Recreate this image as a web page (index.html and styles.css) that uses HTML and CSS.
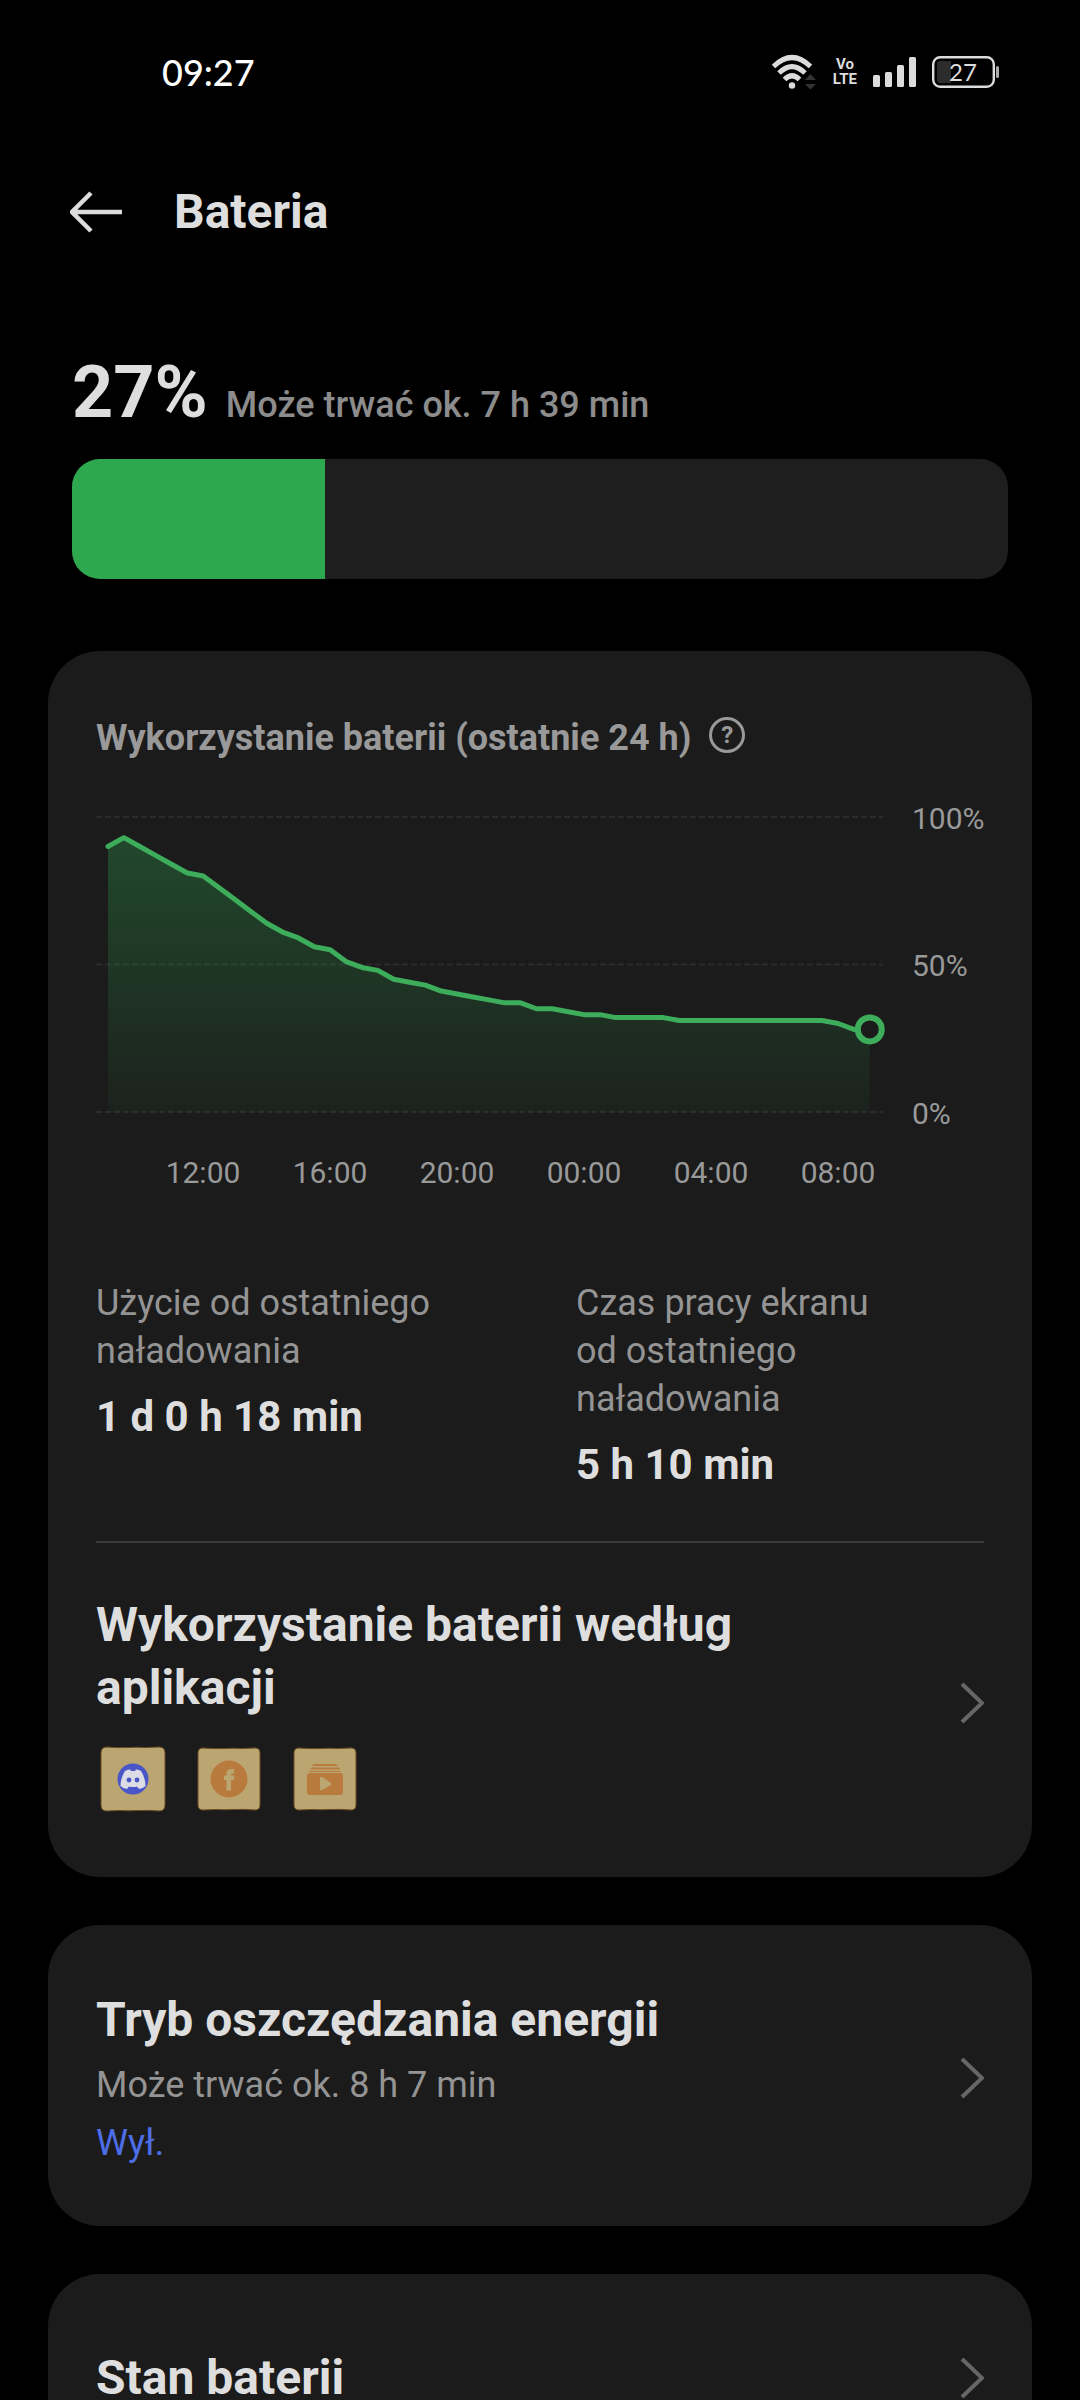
FILE: index.html
```html
<!DOCTYPE html>
<html lang="pl">
<head>
  <meta charset="UTF-8">
  <meta name="viewport" content="width=device-width, initial-scale=1.0">
  <title>Bateria</title>
  <link rel="stylesheet" href="styles.css">
</head>
<body>
  <div class="status-bar">
    <span class="time">09:27</span>
    <div class="status-icons">
      <svg class="wifi" width="46" height="36" viewBox="0 0 46 36">
        <g fill="none" stroke="#dcdcdc" stroke-width="5">
          <path d="M2.500 12.500Q21 -5.500 39.500 12.500"/>
          <path d="M8 19Q21 6 34 19"/>
          <path d="M13.500 25.500Q21 18 28.500 25.500"/>
        </g>
        <circle cx="21" cy="31.500" r="3.200" fill="#dcdcdc"/>
        <path d="M34 26l5.500-6 5.500 6zM34 30l5.500 5.500 5.500-5.500z" fill="#333"/>
      </svg>
      <span class="volte">Vo<br>LTE</span>
      <svg class="signal" width="43" height="30" viewBox="0 0 43 30" fill="#dcdcdc">
        <rect x="0" y="18" width="7" height="12" rx="1.500"/>
        <rect x="12" y="15" width="7" height="15" rx="1.500"/>
        <rect x="24" y="8" width="7" height="22" rx="1.500"/>
        <rect x="36" y="0" width="7" height="30" rx="1.500"/>
      </svg>
      <svg class="battery" width="67" height="32" viewBox="0 0 67 32">
        <rect x="1.200" y="1.200" width="60.600" height="29.600" rx="7" fill="none" stroke="#dcdcdc" stroke-width="2.400"/>
        <path d="M8 5h11v22H8a3 3 0 0 1-3-3V8a3 3 0 0 1 3-3z" fill="#2c2c2c"/>
        <rect x="64" y="10" width="3" height="12" rx="1.500" fill="#aaa"/>
        <text x="31" y="24.500" text-anchor="middle" class="battery-text">27</text>
      </svg>
    </div>
  </div>

  <header class="header">
    <button class="back" aria-label="Wstecz">
      <svg width="54" height="42" viewBox="0 0 54 42" fill="none" stroke="#dcdcdc" stroke-width="4.500">
        <path d="M21 2L2 21l19 19M3 21h49"/>
      </svg>
    </button>
    <h1>Bateria</h1>
  </header>

  <main>
    <section class="level">
      <p class="level-text"><strong>27%</strong> <span>Może trwać ok. 7 h 39 min</span></p>
      <div class="level-bar"><div class="level-fill" style="width: 27%"></div></div>
    </section>

    <section class="card usage">
      <div class="usage-head">
        <h2>Wykorzystanie baterii (ostatnie 24 h)</h2>
        <button class="help" aria-label="Pomoc">?</button>
      </div>

      <svg class="chart" viewBox="0 0 888 410">
        <defs>
          <linearGradient id="fade" x1="0" y1="47" x2="0" y2="322" gradientUnits="userSpaceOnUse">
            <stop offset="0" stop-color="#2ea84f" stop-opacity="0.32"/>
            <stop offset="1" stop-color="#2ea84f" stop-opacity="0.05"/>
          </linearGradient>
        </defs>
        <g class="grid">
          <path d="M0 27h787"/>
          <path d="M0 174.500h787"/>
          <path d="M0 322h787"/>
        </g>
        <polygon id="area" fill="url(#fade)"/>
        <polyline id="line" class="line"/>
        <circle id="now" class="now" r="12"/>
        <g class="axis">
          <text x="816" y="39">100%</text>
          <text x="816" y="186">50%</text>
          <text x="816" y="334">0%</text>
        </g>
        <g class="axis hours">
          <text x="107" y="393">12:00</text>
          <text x="234" y="393">16:00</text>
          <text x="361" y="393">20:00</text>
          <text x="488" y="393">00:00</text>
          <text x="615" y="393">04:00</text>
          <text x="742" y="393">08:00</text>
        </g>
      </svg>

      <div class="stats">
        <div>
          <p class="label">Użycie od&nbsp;ostatniego naładowania</p>
          <p class="value">1 d 0 h 18 min</p>
        </div>
        <div>
          <p class="label">Czas pracy ekranu od&nbsp;ostatniego naładowania</p>
          <p class="value">5 h 10 min</p>
        </div>
      </div>

      <a class="row apps" href="#">
        <div class="row-text">
          <h3>Wykorzystanie baterii według aplikacji</h3>
          <div class="app-icons">
            <svg width="66" height="66" viewBox="0 0 66 66">
              <path class="tile" d="M7 1Q18 2 28 1.500T46 1.500L59 1Q65 1 65 7V59Q65 65 59 65Q48 64 38 64.500T20 64.500L7 65Q1 65 1 59V7Q1 1 7 1z"/>
              <circle cx="33" cy="33" r="15.500" fill="#4a56c8"/>
              <path d="M25 25q3-2 5-1.500l1 1.500h4l1-1.500q2-.5 5 1.500 4.500 7 4.500 15-3 3-6.500 3l-2-2.500q-4 1-8 0L27 43q-3.500 0-6.500-3 0-8 4.500-15z" fill="#dcdce4"/>
              <circle cx="29" cy="34" r="2.400" fill="#4a56c8"/>
              <circle cx="37" cy="34" r="2.400" fill="#4a56c8"/>
            </svg>
            <svg width="66" height="66" viewBox="0 0 66 66">
              <path class="tile" d="M7 2Q18 3 28 2.500T46 2.500L59 2Q64 2 64 7V59Q64 64 59 64Q48 63 38 63.500T20 63.500L7 64Q2 64 2 59V7Q2 2 7 2z"/>
              <circle cx="33" cy="33" r="18.500" fill="#b97a3e"/>
              <path d="M30.500 44.500V34H28v-4.500h2.500V28q0-5 5-5H38v4.500h-2q-1 0-1 1.500v.5h3.500L38 34h-3v10.500z" fill="#bba672"/>
            </svg>
            <svg width="66" height="66" viewBox="0 0 66 66">
              <path class="tile" d="M7 2Q18 3 28 2.500T46 2.500L59 2Q64 2 64 7V59Q64 64 59 64Q48 63 38 63.500T20 63.500L7 64Q2 64 2 59V7Q2 2 7 2z"/>
              <g fill="#b97a3e">
                <path d="M23 18h20q2 0 3 2H20q1-2 3-2zM19 21.500h28l1 2H18zM17.500 25h31l.5 1H17z"/>
                <rect x="15" y="27" width="36" height="22" rx="3"/>
              </g>
              <path d="M28 32q0-1.500 2-1l9 6q1 1 0 2l-9 5q-2 1-2-1z" fill="#bba672"/>
            </svg>
          </div>
        </div>
        <svg class="chevron" width="26" height="44" viewBox="0 0 26 44"><path d="M4 3l20 19L4 41"/></svg>
      </a>
    </section>

    <a class="card row saving" href="#">
      <div class="row-text">
        <h3>Tryb oszczędzania energii</h3>
        <p class="label">Może trwać ok. 8 h 7 min</p>
        <p class="state">Wył.</p>
      </div>
      <svg class="chevron" width="26" height="44" viewBox="0 0 26 44"><path d="M4 3l20 19L4 41"/></svg>
    </a>

    <a class="card row health" href="#">
      <div class="row-text">
        <h3>Stan baterii</h3>
      </div>
      <svg class="chevron" width="26" height="44" viewBox="0 0 26 44"><path d="M4 3l20 19L4 41"/></svg>
    </a>
  </main>

  <script>
    // Battery level every 30 minutes, from 09:00 to 09:00
    const levels = [
      90, 93, 90, 87, 84, 81, 80, 76, 72, 68, 64, 61, 59, 56, 55, 51, 49,
      48, 45, 44, 43, 41, 40, 39, 38, 37, 37, 35, 35, 34, 33, 33, 32, 32,
      32, 32, 31, 31, 31, 31, 31, 31, 31, 31, 31, 31, 30, 28, 28
    ];
    const points = levels.map((level, i) => [12 + i * 15.87, 322 - level * 2.95]);
    const last = points[points.length - 1];
    const line = points.map(p => p.join(",")).join(" ");

    document.getElementById("line").setAttribute("points", line);
    document.getElementById("area").setAttribute("points", `12,322 ${line} ${last[0]},322`);
    document.getElementById("now").setAttribute("cx", last[0]);
    document.getElementById("now").setAttribute("cy", last[1]);
  </script>
</body>
</html>
```

FILE: styles.css
```css
* {
  box-sizing: border-box;
}
body {
  margin: 0;
  height: 100vh;
  overflow: hidden;
  background: #000;
  color: #dedede;
  font-family: Roboto, sans-serif;
  font-size: 36px;
  line-height: 48px;
}
h1, h2, h3, p {
  margin: 0;
}
h1, h3 {
  font-size: 48px;
  font-weight: 700;
}
button {
  padding: 0;
  background: none;
  border: 0;
  cursor: pointer;
}
a {
  color: inherit;
  text-decoration: none;
}
svg {
  display: block;
  flex-shrink: 0;
}

/* Status bar */
.status-bar {
  display: flex;
  align-items: center;
  justify-content: space-between;
  height: 144px;
  padding: 0 81px 0 162px;
}
.time {
  color: #fff;
  font-family: Lato, sans-serif;
  font-weight: 500;
}
.status-icons {
  display: flex;
  align-items: center;
  gap: 16px;
}
.volte {
  color: #dcdcdc;
  font-family: "Liberation Sans Narrow", Roboto, sans-serif;
  font-size: 15px;
  font-weight: 700;
  line-height: 15px;
  text-align: center;
}
.battery-text {
  fill: #dcdcdc;
  font-family: Lato, sans-serif;
  font-size: 24px;
}

/* Header */
.header {
  display: flex;
  align-items: center;
  gap: 50px;
  height: 136px;
  padding: 0 70px;
}
.header h1 {
  line-height: 56px;
}

/* Battery level */
.level {
  padding: 71px 72px 72px;
}
.level-text {
  display: flex;
  align-items: baseline;
  gap: 18px;
  color: #8c8c8c;
  font-weight: 500;
}
.level-text strong {
  color: #dedede;
  font-size: 72px;
  font-weight: 700;
  line-height: 84px;
}
.level-bar {
  height: 120px;
  margin-top: 24px;
  border-radius: 28px;
  background: #1e1e1e;
  overflow: hidden;
}
.level-fill {
  height: 100%;
  background: #2ea84f;
}

/* Cards */
.card {
  margin: 0 48px 48px;
  padding: 0 48px;
  border-radius: 52px;
  background: #1b1b1b;
}
.row {
  display: flex;
  align-items: center;
  gap: 48px;
}
.row-text {
  flex: 1;
}
.row h3 {
  line-height: 63px;
}
.label {
  color: #949494;
}
.chevron {
  fill: none;
  stroke: #666;
  stroke-width: 4px;
}

/* Usage card */
.usage {
  padding-top: 63px;
  padding-bottom: 65px;
}
.usage-head {
  display: flex;
  gap: 18px;
  color: #999;
}
.usage-head h2 {
  font-size: 36px;
  font-weight: 700;
}
.help {
  width: 36px;
  height: 36px;
  margin-top: 3px;
  border: 3px solid #999;
  border-radius: 50%;
  color: #999;
  font-family: Roboto, sans-serif;
  font-size: 24px;
  font-weight: 700;
  line-height: 30px;
}
.chart {
  width: 100%;
  margin-top: 28px;
}
.grid {
  stroke: #2b2b2b;
  stroke-width: 2px;
  stroke-dasharray: 6 3;
}
.line {
  fill: none;
  stroke: #3dac5b;
  stroke-width: 5px;
  stroke-linecap: round;
  stroke-linejoin: round;
}
.now {
  fill: #1b1b1b;
  stroke: #3dac5b;
  stroke-width: 6px;
}
.axis {
  fill: #999;
  font-size: 30px;
}
.hours {
  text-anchor: middle;
}
.stats {
  display: grid;
  grid-template-columns: 1fr 1fr;
  gap: 72px;
  margin-top: 79px;
  padding-bottom: 48px;
  border-bottom: 2px solid #3c3c3c;
}
.value {
  margin-top: 14px;
  font-size: 42px;
  font-weight: 700;
  line-height: 56px;
}
.apps {
  padding-top: 50px;
}
.app-icons {
  display: flex;
  gap: 30px;
  margin-top: 27px;
  padding-left: 4px;
}
.tile {
  fill: #bba672;
  stroke: #6b4a22;
}

/* Power saving */
.saving {
  padding-top: 63px;
  padding-bottom: 59px;
}
.saving .row-text {
  display: flex;
  flex-direction: column;
  gap: 10px;
}
.state {
  color: #4d6ee8;
}

/* Battery health */
.health {
  padding-top: 72px;
  padding-bottom: 72px;
}
```
